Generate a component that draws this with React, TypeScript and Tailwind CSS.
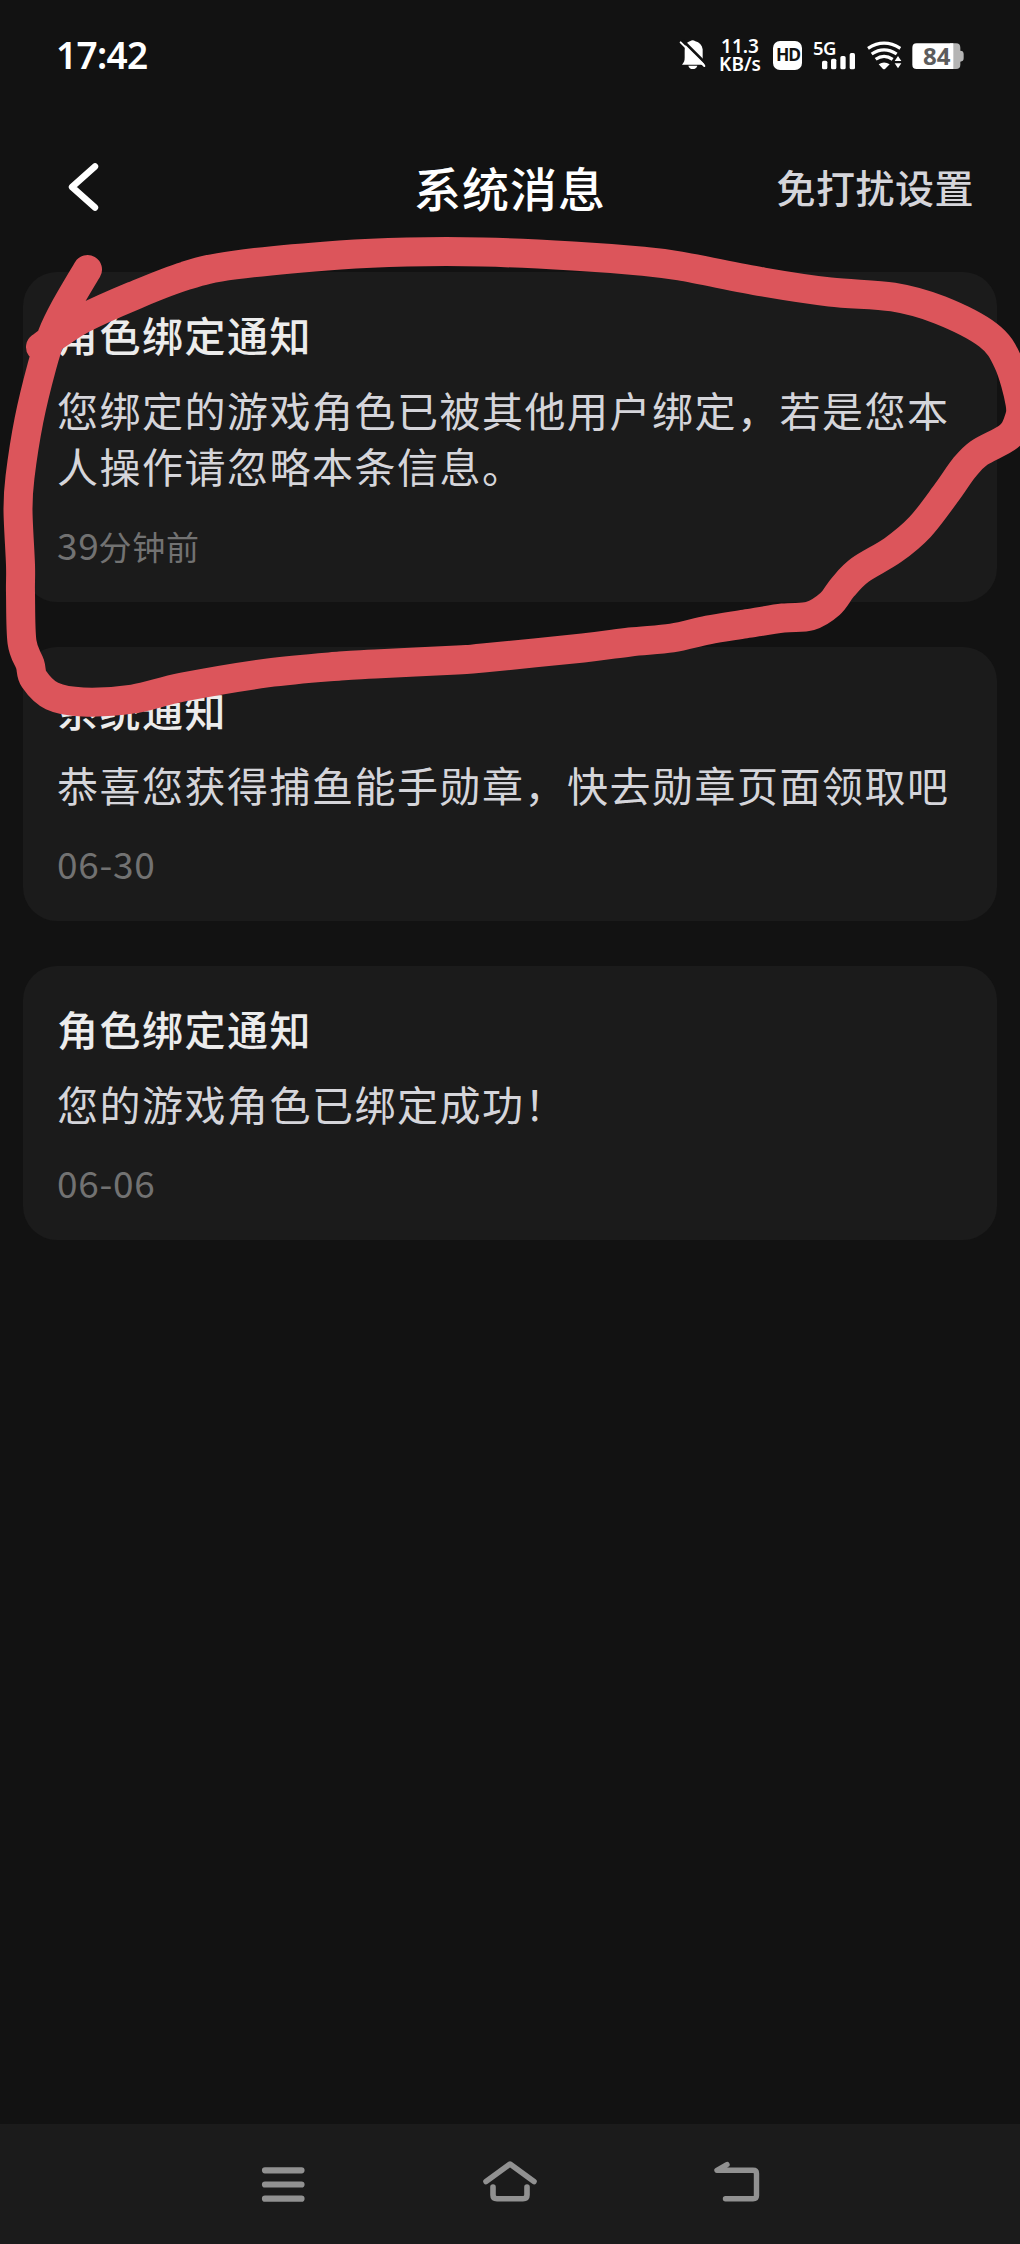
type Message = {
  title: string;
  body: string[];
  time: { digits: string; suffix?: string };
};

const messages: Message[] = [
  {
    title: '角色绑定通知',
    body: ['您绑定的游戏角色已被其他用户绑定，若是您本', '人操作请忽略本条信息。'],
    time: { digits: '39', suffix: '分钟前' },
  },
  {
    title: '系统通知',
    body: ['恭喜您获得捕鱼能手勋章，快去勋章页面领取吧'],
    time: { digits: '06-30' },
  },
  {
    title: '角色绑定通知',
    body: ['您的游戏角色已绑定成功！'],
    time: { digits: '06-06' },
  },
];

const strokePoints: [number, number][] = [
  [40.5, 347], [60, 333], [84, 318], [133, 296], [185, 276], [235, 265], [340, 255], [407, 252], [483, 252], [573, 256],
  [640, 261], [680, 266], [763, 282], [830, 292], [893, 297], [940, 310], [988, 335], [1008, 362], [1020, 403], [1018, 422],
  [1008, 437], [979, 453], [964, 468], [947, 492], [920, 527], [893, 550], [860, 570], [843, 587], [830, 604], [810, 616],
  [783, 618], [745, 624], [708, 630], [672, 638], [630, 642], [583, 648], [483, 658], [457, 660], [375, 664], [340, 666], [267, 673], [183, 687],
  [133, 699], [83, 702], [52, 696], [34, 679], [30, 664], [22, 642], [20.5, 593], [20.5, 565], [18, 510], [20, 477],
  [29, 420], [42, 366], [52, 335], [65, 308], [87.5, 269.5],
];

// Catmull-Rom spline through the points
const toPath = (pts: [number, number][]) =>
  pts.slice(1).reduce((d, p, i) => {
    const a = pts[i];
    const before = pts[i - 1] ?? a;
    const after = pts[i + 2] ?? p;
    const c1 = [a[0] + (p[0] - before[0]) / 6, a[1] + (p[1] - before[1]) / 6];
    const c2 = [p[0] - (after[0] - a[0]) / 6, p[1] - (after[1] - a[1]) / 6];
    return `${d} C${c1.join(' ')} ${c2.join(' ')} ${p.join(' ')}`;
  }, `M${pts[0].join(' ')}`);

const StatusBar = () => (
  <div className="flex h-[110px] items-center pl-[56px] pr-[55px] text-white">
    <span className="pb-[2px] font-['Noto_Sans'] text-[37px] font-semibold leading-none tracking-[-0.7px]">17:42</span>
    <div className="ml-auto flex items-center">
      <svg className="h-[32px] w-[28px]" viewBox="57 57 84 96">
        <path d="M66 134 C73 126 74 122 74 112 V92 C74 72 84 65 90 64 Q98 57 106 64 C118 67 126 75 128 88 V112 C128 122 129 126 135 134 Z" fill="#fff" />
        <path d="M85 137 H112 Q109 147 98 147 Q88 147 85 137 Z" fill="#fff" />
        <path d="M67 60 L141 134" stroke="#121212" strokeWidth="8" />
        <path d="M62 67 L133 138" stroke="#fff" strokeWidth="6" strokeLinecap="round" />
      </svg>
      <div className="ml-[12px] flex w-[42px] flex-col items-center font-['Noto_Sans'] text-[19px] font-semibold leading-[18px]">
        <span>11.3</span>
        <span>KB/s</span>
      </div>
      <div className="ml-[12px] flex h-[29px] w-[29px] items-center justify-center rounded-[7px] bg-white font-['Noto_Sans'] text-[17.5px] font-bold leading-none tracking-[-1px] text-[#121212]">
        <span className="-mr-px">HD</span>
      </div>
      <div className="relative ml-[11px] h-[32px] w-[43px]">
        <span className="absolute -top-px left-0 font-['Noto_Sans'] text-[18.5px] font-semibold leading-[19px] tracking-[-0.5px]">5G</span>
        <svg className="h-full w-full" viewBox="458 57 129 96">
          <g fill="#fff">
            <rect x="485" y="122" width="16" height="26" rx="5" />
            <rect x="512" y="116" width="16" height="32" rx="5" />
            <rect x="540" y="108" width="16" height="40" rx="5" />
            <rect x="568" y="99" width="16" height="49" rx="5" />
          </g>
        </svg>
      </div>
      <svg className="ml-[10px] h-[32px] w-[36px]" viewBox="618 57 108 96">
        <g fill="none" stroke="#fff" strokeWidth="9.5">
          <path d="M624 85 Q672 54 721 85" />
          <path d="M635 102 Q672 77 710 102" />
          <path d="M647 118 Q672 100 698 118" />
        </g>
        <path d="M656 133 Q672 122 689 133 L675 147 Q672 149 669 147 Z" fill="#fff" />
        <path d="M714 108 L724 123 H704 Z M704 130 H724 L714 145 Z" fill="#fff" />
      </svg>
      <div className="relative ml-[10px] h-[32px] w-[53px]">
        <svg className="h-full w-full" viewBox="756 57 159 96">
          <path d="M870 70 H888 Q901 70 901 83 V92 Q911 92 911 102 V115 Q911 125 901 125 V134 Q901 147 888 147 H870 Z" fill="#b4b4b4" />
          <path d="M770 70 H880 V147 H770 Q757 147 757 134 V83 Q757 70 770 70 Z" fill="#fff" />
        </svg>
        <span className="absolute left-[11px] top-[3px] font-['Noto_Sans'] text-[24px] font-bold leading-[27px] text-[#5c5c5c]">84</span>
      </div>
    </div>
  </div>
);

const Header = () => (
  <header className="grid h-[162px] grid-cols-[1fr_auto_1fr] items-center pl-[66px] pr-[46px] pb-[9px] font-medium">
    <svg className="h-[50px] w-[34px]" viewBox="66 162 34 50" fill="none" stroke="#fff" strokeWidth="6.4" strokeLinecap="round" strokeLinejoin="round">
      <path d="M95 166.5 L72 187 L95 207.5" />
    </svg>
    <h1 className="-mt-px translate-x-[-10px] text-[47px] leading-none tracking-[1px] text-white">系统消息</h1>
    <span className="justify-self-end text-[39px] leading-none tracking-[0.5px] text-[#d5d5da]">免打扰设置</span>
  </header>
);

const MessageCard = ({ title, body, time }: Message) => (
  <article className="rounded-[34px] bg-[#1b1b1b] px-[34px] pb-[31px] pt-[34px] tracking-[1.5px]">
    <h2 className="text-[41px] font-medium leading-[56px] text-[#ececec]">{title}</h2>
    <div className="mt-[19px] text-[41px] leading-[56px] text-[#d5d5da]">
      {body.map((line) => (
        <p key={line} className="whitespace-nowrap">{line}</p>
      ))}
    </div>
    <div className="mt-[25px] flex h-[53px] items-baseline leading-[53px] text-[#727272]">
      <span className="text-[37px] tracking-[0.7px]">{time.digits}</span>
      {time.suffix && <span className="-ml-px text-[33px] tracking-[0.7px]">{time.suffix}</span>}
    </div>
  </article>
);

const NavBar = () => (
  <nav className="flex h-[120px] items-center justify-between bg-[#1b1b1b] px-[258px] pb-[4px]">
    <svg className="h-[44px] w-[50px]" viewBox="258 2160 50 44" fill="none" stroke="#919191" strokeWidth="6.2" strokeLinecap="round">
      <path d="M265 2170.3 H301.5 M265 2184.5 H301.5 M265 2198.7 H301.5" />
    </svg>
    <svg className="h-[44px] w-[56px]" viewBox="482 2160 56 44" fill="none" stroke="#919191" strokeWidth="5.6" strokeLinecap="round" strokeLinejoin="round">
      <path d="M486 2181.5 L510 2164 L534 2181.5" />
      <path d="M493 2187 V2195 Q493 2198.7 497 2198.7 H523 Q527 2198.7 527 2195 V2187" />
    </svg>
    <svg className="h-[44px] w-[50px]" viewBox="712 2160 50 44" fill="none" stroke="#919191" strokeWidth="5.4" strokeLinecap="round" strokeLinejoin="round">
      <path d="M727 2164.5 L717 2170.3 H753 Q756.5 2170.3 756.5 2173.5 V2195.5 Q756.5 2198.7 753 2198.7 H725.5" />
    </svg>
  </nav>
);

const App = () => {
  return (
    <div className="relative flex h-[2244px] w-[1020px] flex-col overflow-hidden bg-[#121212] font-['Noto_Sans_CJK_SC',sans-serif]">
      <StatusBar />
      <Header />
      <main className="flex flex-1 flex-col gap-[45px] px-[23px]">
        {messages.map((message) => (
          <MessageCard key={message.time.digits} {...message} />
        ))}
      </main>
      <NavBar />

      {/* hand-drawn marker over the first card */}
      <svg className="pointer-events-none absolute inset-0 h-full w-full" viewBox="0 0 1020 2244">
        <path d={toPath(strokePoints)} fill="none" stroke="#dc555b" strokeWidth="29" strokeLinecap="round" strokeLinejoin="round" />
      </svg>
    </div>
  );
};

export default App;
